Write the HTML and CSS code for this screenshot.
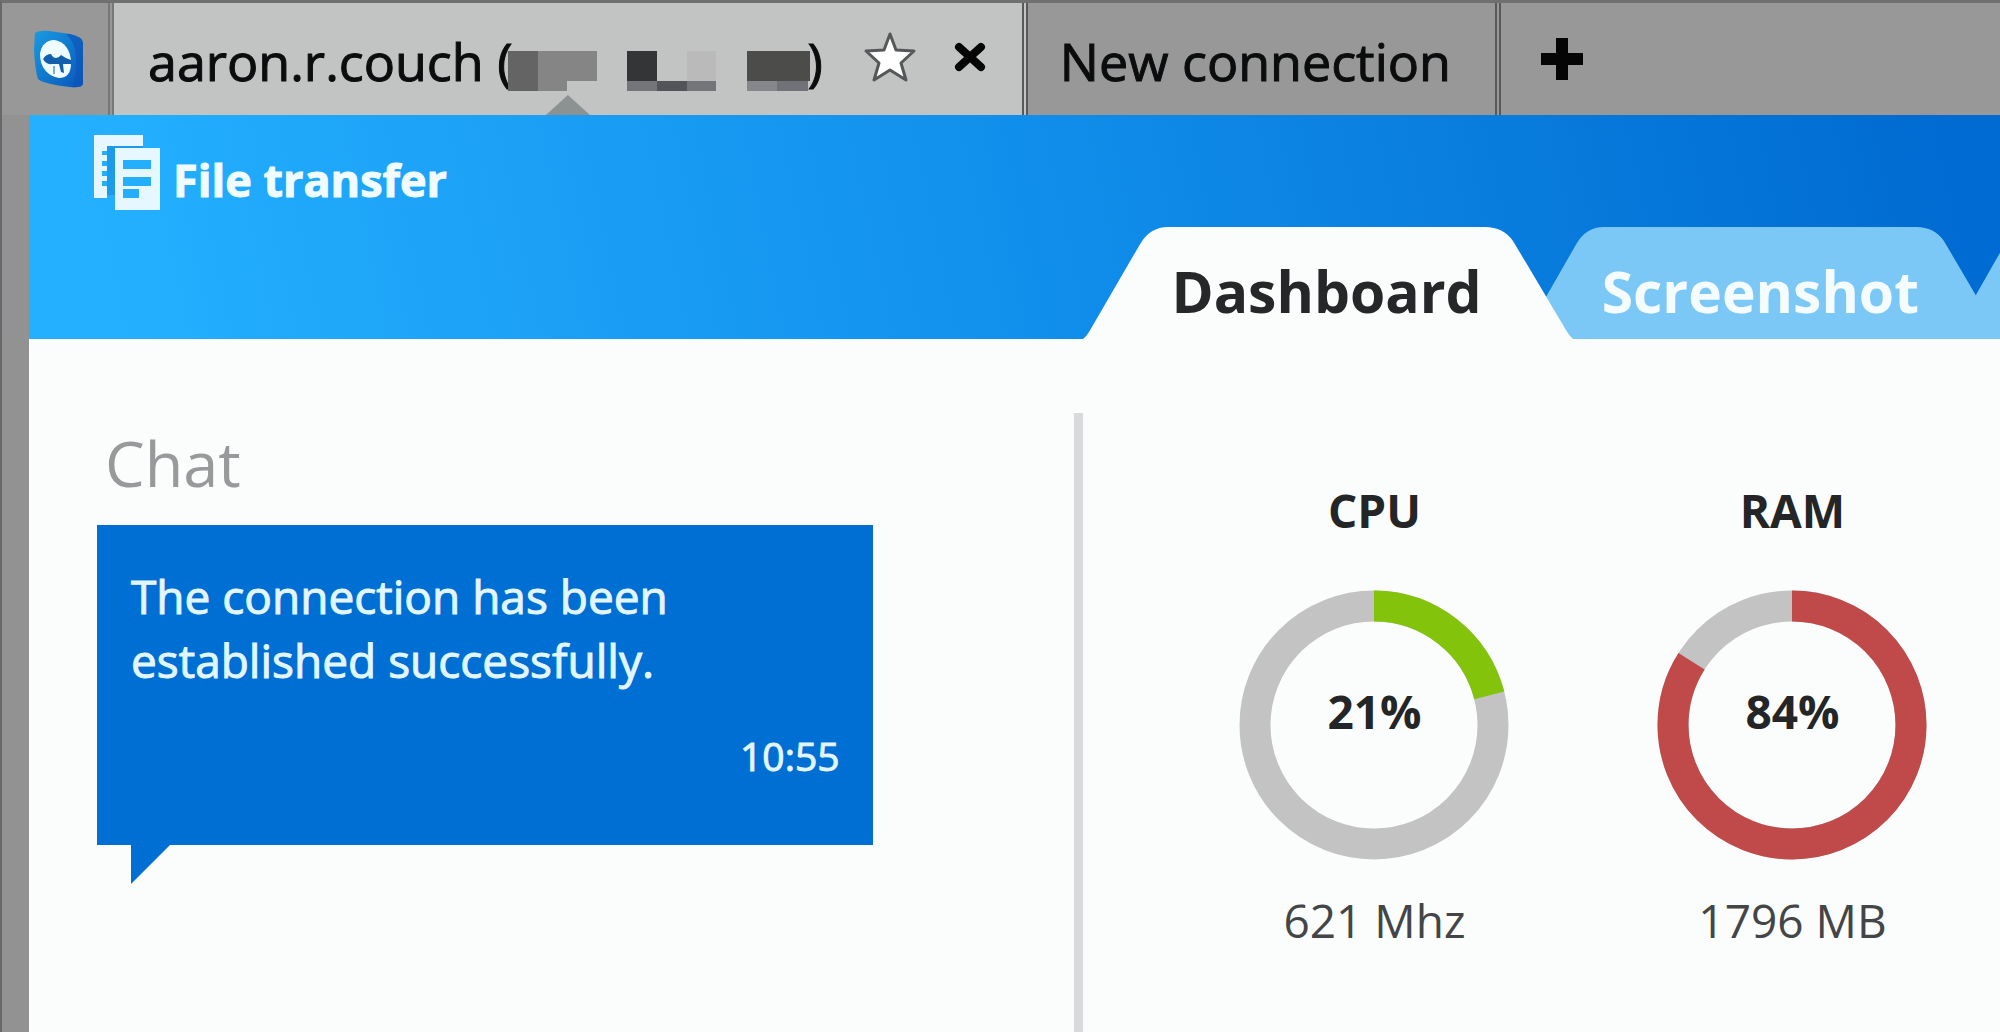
FILE: index.html
```html
<!DOCTYPE html>
<html lang="en">
<head>
<meta charset="utf-8">
<title>aaron.r.couch</title>
<link rel="stylesheet" href="styles.css">
</head>
<body>
<div class="window">
  <nav class="sessions" aria-label="Connections">
    <button class="home" aria-label="Home">
      <svg class="home-icon" viewBox="0 0 50 58" aria-hidden="true">
        <defs>
          <linearGradient id="logo" x1="0" y1="0" x2="1" y2="1">
            <stop offset="0" stop-color="#189be0"/>
            <stop offset="1" stop-color="#0a55ba"/>
          </linearGradient>
        </defs>
        <path fill="url(#logo)" d="M1 3Q5 0 15 1L36 4Q49 7 49 13V54Q48 58 36 57Q10 54 4 49Q1 40 0 20Z"/>
        <path fill="#0d52b5" opacity=".6" d="M36 4Q49 7 49 13V54Q47 58 38 57Q43 46 42 26Q41 12 32 4Z"/>
        <path fill="#effcff" d="M6 24C7 15 13 10 20 10C30 11 37 20 37 33C37 43 33 48 25 48C14 46 6 38 6 24Z"/>
        <path fill="#125fae" d="M9 29Q12 24 17 24Q19 28 22 28Q25 28 27 25Q31 28 37 30V34H29L30 43L27 42L25 34H18Q12 35 9 29Z"/>
        <path fill="none" stroke="#125fae" d="M20 36V44"/>
      </svg>
    </button>
    <div class="session session-active">
      <button class="session-name">aaron.r.couch (<svg class="masked" viewBox="0 0 302 40" aria-hidden="true">
          <path fill="#646464" d="M0 0H30V40H0Z"/>
          <path fill="#858585" d="M30 0H89V30H59V40H30Z"/>
          <path fill="#333536" d="M119 0H149V30H119Z"/>
          <path fill="#bababa" d="M179 0H208V30H179Z"/>
          <path fill="#747578" d="M119 30H208V40H119Z"/>
          <path fill="#535459" d="M149 30H179V40H149Z"/>
          <path fill="#4c4c4a" d="M239 0H302V30H239Z"/>
          <path fill="#85878b" d="M239 30H300V40H239Z"/>
          <path fill="#707277" d="M269 30H300V40H269Z"/>
        </svg>)</button>
      <button class="session-action star" aria-label="Add to favorites">
        <svg width="54" height="52" viewBox="0 0 54 52" aria-hidden="true">
          <path fill="#fff" stroke="#555759" stroke-width="3" stroke-linejoin="round" d="M27 3L33 19L51 20L38 32L43 49L27 39L11 49L16 32L3 20L21 19Z"/>
        </svg>
      </button>
      <button class="session-action" aria-label="Close">
        <svg width="32" height="32" viewBox="0 0 32 32" aria-hidden="true">
          <path stroke="#050505" stroke-width="8" stroke-linecap="round" d="M5 6L27 26M27 6L5 26"/>
        </svg>
      </button>
    </div>
    <div class="session">
      <button class="session-name">New connection</button>
    </div>
    <button class="add" aria-label="Open tab">
      <svg width="42" height="42" viewBox="0 0 42 42" aria-hidden="true">
        <path fill="#050505" d="M15 0H27V15H42V27H27V42H15V27H0V15H15Z"/>
      </svg>
    </button>
  </nav>

  <div class="client">
    <header class="toolbar">
      <button class="transfer">
        <svg width="66" height="76" viewBox="0 0 66 76" aria-hidden="true">
          <path fill="#e6f7ff" d="M0 0H49V11H13V16H8V20H13V26H8V31H13V36H8V41H13V46H8V51H13V63H0Z"/>
          <path fill="#1a86d8" opacity=".5" d="M13 11H49V13H21V60H13Z"/>
          <path fill="#e6f7ff" fill-rule="evenodd" d="M21 13H66V75H21ZM29 25V34H57V25ZM29 42V51H57V42ZM29 54V63H45V54Z"/>
        </svg>
        <span>File transfer</span>
      </button>
      <div class="tabs" role="tablist">
        <button class="tab tab-active" role="tab" aria-selected="true">
          <svg class="tab-shape" viewBox="0 0 490 111" preserveAspectRatio="none" aria-hidden="true">
            <path d="M0 111Q3 109 6 104L57 17Q67 0 85 0H402Q420 0 430 14L484 104Q487 109 490 111Z"/>
          </svg>
          <span>Dashboard</span>
        </button>
        <button class="tab" role="tab" aria-selected="false">
          <svg class="tab-shape" viewBox="0 0 490 111" preserveAspectRatio="none" aria-hidden="true">
            <path d="M0 111Q3 109 6 104L57 17Q67 0 85 0H402Q420 0 430 14L484 104Q487 109 490 111Z"/>
          </svg>
          <span>Screenshot</span>
        </button>
        <button class="tab" role="tab" aria-selected="false" aria-label="More">
          <svg class="tab-shape" viewBox="0 0 490 111" preserveAspectRatio="none" aria-hidden="true">
            <path d="M0 111Q3 109 6 104L57 17Q67 0 85 0H402Q420 0 430 14L484 104Q487 109 490 111Z"/>
          </svg>
        </button>
      </div>
    </header>

    <main class="content">
      <section class="chat">
        <h2 class="chat-title">Chat</h2>
        <article class="bubble">
          <p class="message">The connection has been<br>established successfully.</p>
          <time class="time">10:55</time>
        </article>
      </section>
      <section class="dashboard" aria-label="Dashboard">
        <article class="stat">
          <h3 class="stat-name">CPU</h3>
          <div class="gauge">
            <svg class="ring" viewBox="0 0 270 270" aria-hidden="true">
              <circle class="ring-track" cx="135" cy="135" r="119"/>
              <circle class="ring-value ring-low" cx="135" cy="135" r="119" pathLength="100" stroke-dasharray="21 79"/>
            </svg>
            <span class="percent">21%</span>
          </div>
          <p class="amount">621 Mhz</p>
        </article>
        <article class="stat">
          <h3 class="stat-name">RAM</h3>
          <div class="gauge">
            <svg class="ring" viewBox="0 0 270 270" aria-hidden="true">
              <circle class="ring-track" cx="135" cy="135" r="119"/>
              <circle class="ring-value ring-high" cx="135" cy="135" r="119" pathLength="100" stroke-dasharray="84 16"/>
            </svg>
            <span class="percent">84%</span>
          </div>
          <p class="amount">1796 MB</p>
        </article>
      </section>
    </main>
  </div>
</div>
</body>
</html>
```
FILE: styles.css
```css
* {
  box-sizing: border-box;
  margin: 0;
}

body {
  font-family: "Open Sans", "Noto Sans", sans-serif;
  color: #242526;
  background: #929292;
}

button {
  padding: 0;
  border: 0;
  background: none;
  font: inherit;
  color: inherit;
}

svg {
  display: block;
  flex: none;
}

.window {
  display: flex;
  flex-direction: column;
  min-height: 100vh;
  overflow: hidden;
  border-top: 3px solid #70716f;
  border-left: 2px solid #686868;
}

/* connection tabs */
.sessions {
  display: flex;
  height: 112px;
  background: #979897;
  font-size: 52px;
  line-height: 60px;
  color: #0b0c0d;
  white-space: nowrap;
}

.home {
  display: flex;
  justify-content: flex-end;
  align-items: center;
  width: 112px;
  padding-right: 24px;
  border-right: 6px double #777877;
}

.home-icon {
  width: 50px;
  height: 58px;
}

.session {
  position: relative;
  display: flex;
  align-items: center;
  padding: 0 44px 0 32px;
  border-right: 6px double #58595a;
}

.session-active {
  padding: 0 36px 0 34px;
  background: #c2c3c3;
}

.session-active::after {
  content: "";
  position: absolute;
  bottom: 0;
  left: 50%;
  width: 44px;
  height: 20px;
  margin-left: -22px;
  background: #8c9192;
  clip-path: polygon(50% 0, 100% 100%, 0 100%);
}

.session-name {
  display: flex;
  align-items: center;
  padding-top: 4px;
  white-space: pre;
  -webkit-text-stroke: 1px currentColor;
}

.masked {
  width: 302px;
  height: 40px;
  margin: 20px -2px 0 -5px;
}

.session-action {
  padding-bottom: 4px;
}

.star {
  margin: 0 37px 0 40px;
}

.add {
  padding-left: 40px;
}

/* client area */
.client {
  flex: 1;
  display: flex;
  flex-direction: column;
  margin-left: 27px;
  background: #fbfdfc;
}

.toolbar {
  display: grid;
  grid-template-columns: 53.5% 1fr;
  height: 224px;
  background: linear-gradient(78deg, #24b0ff 4%, #118fec 50%, #0a80e0 70%, #006bd2 97%);
}

.transfer {
  display: flex;
  align-items: center;
  align-self: start;
  gap: 13px;
  padding: 20px 0 0 65px;
  font-size: 45px;
  line-height: 60px;
  font-weight: 700;
  color: #f0fcff;
  -webkit-text-stroke: 1px currentColor;
}

.transfer span {
  padding-top: 14px;
}

.tabs {
  display: flex;
  align-items: flex-end;
  min-width: 0;
}

.tab {
  position: relative;
  flex: none;
  height: 112px;
  min-width: 480px;
  padding: 16px 92px 0 88px;
  font-size: 57px;
  line-height: 72px;
  font-weight: 700;
  color: #f4fcff;
}

.tab + .tab {
  margin-left: -54px;
  padding: 16px 84px 0 82px;
}

.tab:nth-child(1) {
  z-index: 3;
}

.tab:nth-child(2) {
  z-index: 2;
}

.tab span {
  position: relative;
}

.tab-shape {
  position: absolute;
  inset: 0;
  width: 100%;
  height: 100%;
  fill: #7bc8f6;
}

.tab-active {
  color: #262728;
}

.tab-active .tab-shape {
  fill: #fbfdfc;
}

.content {
  flex: 1;
  display: grid;
  grid-template-columns: 53.5% 1fr;
  padding-top: 74px;
}

.chat {
  padding: 14px 201px 0 68px;
  border-right: 9px solid #d9dadb;
}

.chat-title {
  margin-bottom: 26px;
  padding-left: 8px;
  font-size: 63px;
  line-height: 72px;
  font-weight: 400;
  color: #98999b;
}

.bubble {
  position: relative;
  display: flex;
  flex-direction: column;
  padding: 39px 34px 65px;
  background: #006fd3;
  color: #e2f6ff;
}

.bubble::after {
  content: "";
  position: absolute;
  top: 100%;
  left: 34px;
  width: 39px;
  height: 39px;
  background: #006fd3;
  clip-path: polygon(0 0, 100% 0, 0 100%);
}

.message {
  font-size: 46px;
  line-height: 64px;
  -webkit-text-stroke: 1px currentColor;
}

.time {
  align-self: flex-end;
  margin-top: 40px;
  font-size: 39px;
  line-height: 48px;
  -webkit-text-stroke: 1px currentColor;
}

/* usage gauges */
.dashboard {
  display: flex;
  gap: 148px;
  padding: 69px 0 0 156px;
}

.stat {
  flex: none;
  width: 270px;
  text-align: center;
  font-size: 46px;
  line-height: 56px;
}

.stat-name {
  font-size: 46px;
  font-weight: 700;
}

.gauge {
  display: grid;
  place-items: center;
  margin: 52px 0 32px;
}

.gauge > * {
  grid-area: 1 / 1;
}

.ring {
  width: 270px;
  height: 270px;
  fill: none;
  stroke-width: 31px;
}

.ring-track {
  stroke: #c3c3c3;
}

.ring-value {
  transform: rotate(-90deg);
  transform-origin: center;
}

.ring-low {
  stroke: #83c30c;
}

.ring-high {
  stroke: #c04a4a;
}

.percent {
  padding-bottom: 28px;
  font-weight: 700;
}

.amount {
  color: #444547;
}
```
